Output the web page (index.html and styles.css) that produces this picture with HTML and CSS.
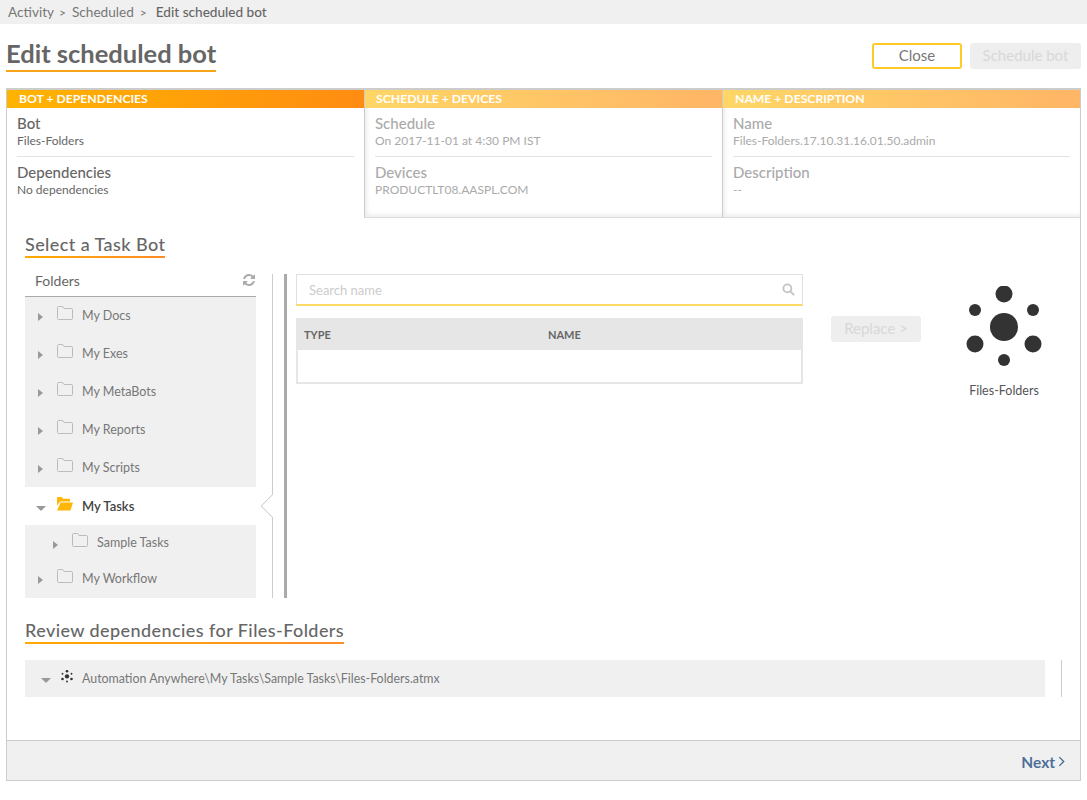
FILE: index.html
```html
<!DOCTYPE html>
<html lang="en">
    <head>
        <meta charset="UTF-8" />
        <title>Edit scheduled bot</title>
        <link rel="stylesheet" href="styles.css">
    </head>
    <body>
        <svg class="defs" width="0" height="0">
            <symbol id="folder" viewBox="0 0 16 14">
                <path d="M1.5 13.5h13a1 1 0 0 0 1-1v-9a1 1 0 0 0-1-1H7L5.7.5H1.5a1 1 0 0 0-1 1v11a1 1 0 0 0 1 1z" />
            </symbol>
            <symbol id="bot" viewBox="0 0 76 84">
                <circle cx="38" cy="41" r="14" />
                <circle cx="38" cy="8" r="8.5" />
                <circle cx="38" cy="74" r="6" />
                <circle cx="9" cy="24" r="6" />
                <circle cx="67" cy="24" r="6" />
                <circle cx="9" cy="58" r="8.5" />
                <circle cx="67" cy="58" r="8.5" />
            </symbol>
        </svg>

        <nav class="crumbs">
            <span>Activity</span><i>&gt;</i><span>Scheduled</span><i>&gt;</i><b>Edit scheduled bot</b>
        </nav>

        <header class="pageHead">
            <h1>Edit scheduled bot</h1>
            <div class="actions">
                <button class="btnClose">Close</button>
                <button class="btnOff btnSchedule">Schedule bot</button>
            </div>
        </header>

        <main class="panel">
            <div class="tabs">
                <section class="tab active">
                    <h2>BOT + DEPENDENCIES</h2>
                    <div class="field line"><h3>Bot</h3><p>Files-Folders</p></div>
                    <div class="field"><h3>Dependencies</h3><p>No dependencies</p></div>
                </section>
                <section class="tab">
                    <h2>SCHEDULE + DEVICES</h2>
                    <div class="field line"><h3>Schedule</h3><p>On 2017-11-01 at 4:30 PM IST</p></div>
                    <div class="field"><h3>Devices</h3><p>PRODUCTLT08.AASPL.COM</p></div>
                </section>
                <section class="tab">
                    <h2>NAME + DESCRIPTION</h2>
                    <div class="field line"><h3>Name</h3><p>Files-Folders.17.10.31.16.01.50.admin</p></div>
                    <div class="field"><h3>Description</h3><p>--</p></div>
                </section>
            </div>

            <div class="content">
                <h2 class="secTitle">Select a Task Bot</h2>
                <div class="picker">
                    <div class="tree">
                        <div class="treeHead">
                            <span>Folders</span>
                            <svg class="refresh" viewBox="0 0 1792 1792"><path d="M1639 1056q0 5-1 7-64 268-268 434.5t-478 166.5q-146 0-282.5-55t-243.5-157l-129 129q-19 19-45 19t-45-19-19-45v-448q0-26 19-45t45-19h448q26 0 45 19t19 45-19 45l-137 137q71 66 161 102t187 36q134 0 250-65t186-179q11-17 53-117 8-23 30-23h192q13 0 22.5 9.5t9.5 22.5zm25-800v448q0 26-19 45t-45 19h-448q-26 0-45-19t-19-45 19-45l138-138q-148-137-349-137-134 0-250 65t-186 179q-11 17-53 117-8 23-30 23h-199q-13 0-22.5-9.5t-9.5-22.5v-7q65-268 270-434.5t480-166.5q146 0 284 55.5t245 156.5l130-129q19-19 45-19t45 19 19 45z" /></svg>
                        </div>
                        <ul class="treeList">
                            <li><i class="arrow"></i><svg class="folder"><use href="#folder" /></svg>My Docs</li>
                            <li><i class="arrow"></i><svg class="folder"><use href="#folder" /></svg>My Exes</li>
                            <li><i class="arrow"></i><svg class="folder"><use href="#folder" /></svg>My MetaBots</li>
                            <li><i class="arrow"></i><svg class="folder"><use href="#folder" /></svg>My Reports</li>
                            <li><i class="arrow"></i><svg class="folder"><use href="#folder" /></svg>My Scripts</li>
                            <li class="current">
                                <i class="arrow down"></i>
                                <svg class="folderOpen" viewBox="0 0 16 14"><path d="M0 1.2C0 .5.5 0 1.2 0h3.6l1.4 1.8h5.6c.7 0 1.2.5 1.2 1.2v1.4H3.2L0 8.6zM3.6 5.6H16l-2.6 8H0z" /></svg>
                                My Tasks
                            </li>
                            <li class="sub"><i class="arrow"></i><svg class="folder"><use href="#folder" /></svg>Sample Tasks</li>
                            <li class="last"><i class="arrow"></i><svg class="folder"><use href="#folder" /></svg>My Workflow</li>
                        </ul>
                    </div>
                    <div class="rule"><span class="notch"></span></div>
                    <div class="results">
                        <div class="search">
                            <span>Search name</span>
                            <svg class="searchIcon" viewBox="0 0 14 14"><circle cx="5.8" cy="5.8" r="4.3" /><path d="M9 9l4 4" /></svg>
                        </div>
                        <div class="grid">
                            <div class="gridHead"><span class="colType">TYPE</span><span>NAME</span></div>
                            <div class="gridBody"></div>
                        </div>
                    </div>
                    <button class="btnOff btnReplace">Replace &gt;</button>
                    <div class="botCard">
                        <svg class="botIcon"><use href="#bot" /></svg>
                        <span>Files-Folders</span>
                    </div>
                </div>

                <h2 class="secTitle review">Review dependencies for Files-Folders</h2>
                <div class="deps">
                    <div class="depRow">
                        <i class="arrow down"></i>
                        <svg class="depIcon"><use href="#bot" /></svg>
                        Automation Anywhere\My Tasks\Sample Tasks\Files-Folders.atmx
                    </div>
                    <div class="depRule"></div>
                </div>
            </div>

            <footer class="panelFoot">
                <a class="next">Next<svg viewBox="0 0 8 12"><path d="M1.5 1l5 5-5 5" /></svg></a>
            </footer>
        </main>
    </body>
</html>
```

FILE: styles.css
```css
* {
    box-sizing: border-box;
}
body {
    margin: 0;
    height: 800px;
    overflow: hidden;
    background-color: #fff;
    color: #666;
    font-family: 'Lato', 'Open Sans', sans-serif;
    font-size: 12px;
}
h1, h2, h3, p, ul {
    margin: 0;
    padding: 0;
}
.defs {
    position: absolute;
}
.crumbs {
    display: flex;
    align-items: center;
    height: 24px;
    padding-left: 8px;
    background-color: #f0f0f0;
    font-size: 13.6px;
    color: #777;
}
.crumbs i {
    margin: 0 9px 0 6px;
    font-style: normal;
    font-size: 12px;
}
.crumbs i:first-of-type {
    margin: 0 6px 0 5px;
}
.crumbs b {
    font-weight: 500;
    color: #666;
}
.pageHead {
    display: flex;
    justify-content: space-between;
    height: 64px;
    padding: 19px 6px 0;
}
.pageHead h1 {
    height: 29px;
    border-bottom: 2px solid #f9a51a;
    font-size: 25.5px;
    line-height: 20px;
    font-weight: 700;
    color: #666;
}
.actions {
    display: flex;
    gap: 8px;
}
button {
    height: 26px;
    border-radius: 3px;
    font-family: inherit;
    font-size: 15px;
    padding: 0 0 2px;
}
.btnClose {
    width: 90px;
    border: 2px solid #ffc926;
    background-color: #fff;
    color: #777;
}
.btnOff {
    border: none;
    background-color: #eee;
    color: #d8d8d8;
}
.btnSchedule {
    width: 111px;
}
.panel {
    display: flex;
    flex-direction: column;
    height: 693px;
    margin: 0 6px;
    border: 1px solid #ccc;
    border-top-width: 2px;
}
.tabs {
    display: flex;
    height: 128px;
}
.tab {
    flex: 0 0 358px;
    padding: 0 10px;
    border-left: 1px solid #ccc;
    border-bottom: 1px solid #ddd;
    box-shadow: inset 2px -2px 4px rgba(0, 0, 0, 0.08);
    color: #aaa;
}
.tab h2 {
    height: 18px;
    margin: 0 -10px 6px;
    padding-left: 11px;
    background: linear-gradient(to right, #ffd666, #ffb566);
    font-size: 12.2px;
    line-height: 18px;
    font-weight: 700;
    color: #fff;
}
.tab:last-child h2 {
    padding-left: 12px;
}
.tab.active {
    flex-basis: 357px;
    border: none;
    box-shadow: none;
    color: #666;
}
.tab.active h2 {
    padding-left: 12px;
    background: linear-gradient(to right, #ffb400, #ff8c12);
}
.field h3 {
    font-size: 15px;
    line-height: 18px;
    font-weight: 500;
}
.field p {
    font-size: 12px;
    line-height: 16px;
    margin-top: 1px;
}
.field.line {
    height: 43px;
    margin-bottom: 6px;
    border-bottom: 1px solid #e3e3e3;
}
.content {
    flex: 1;
    padding: 17px 18px 0;
}
.secTitle {
    width: fit-content;
    height: 23px;
    border-bottom: 2px solid;
    border-image: linear-gradient(to right, #ffaa00, #ff8c2a) 1;
    font-size: 18px;
    line-height: 18px;
    font-weight: 500;
    letter-spacing: 0.42px;
    color: #666;
}
.picker {
    display: flex;
    align-items: flex-start;
    height: 330px;
    margin-top: 10px;
}
.tree {
    width: 231px;
    flex-shrink: 0;
}
.treeHead {
    display: flex;
    justify-content: space-between;
    align-items: center;
    height: 29px;
    padding: 0 0 4px 10px;
    border-bottom: 1px solid #aaa;
    font-size: 14px;
}
.refresh {
    width: 14px;
    height: 14px;
    fill: #aaa;
}
.treeList {
    list-style: none;
    background-color: #f0f0f0;
}
.treeList li {
    display: flex;
    align-items: center;
    height: 38px;
    padding: 0 0 2px 13px;
    font-size: 12.5px;
    color: #777;
}
.treeList li.current {
    padding-bottom: 0;
    background-color: #fff;
    font-size: 13px;
    font-weight: 600;
    color: #444;
}
.treeList li.sub {
    height: 35px;
    padding: 0 0 0 28px;
}
.arrow {
    width: 0;
    height: 0;
    margin: 4px 14px 0 0;
    border-style: solid;
    border-width: 4px 0 4px 5px;
    border-color: transparent transparent transparent #999;
}
.arrow.down {
    margin: 4px 11px 0 -2px;
    border-width: 5px 5px 0;
    border-color: #999 transparent transparent;
}
.folder {
    width: 16px;
    height: 14px;
    margin: -5px 9px 0 0;
    fill: none;
    stroke: #bbb;
}
.folderOpen {
    width: 16px;
    height: 14px;
    margin: -5px 9px 0 0;
    fill: #ffb606;
}
.rule {
    position: relative;
    flex-shrink: 0;
    box-sizing: content-box;
    width: 11px;
    height: 324px;
    margin: 6px 9px 0 16px;
    border-left: 1px solid #ccc;
    border-right: 3px solid #aaa;
}
.notch {
    position: absolute;
    top: 223px;
    left: -9px;
    width: 18px;
    height: 18px;
    background-color: #fff;
    border-left: 1px solid #ccc;
    border-bottom: 1px solid #ccc;
    transform: rotate(45deg);
    clip-path: polygon(0 0, 100% 100%, 0 100%);
}
.results {
    width: 507px;
    flex-shrink: 0;
    margin-top: 6px;
}
.search {
    display: flex;
    justify-content: space-between;
    align-items: center;
    height: 32px;
    padding: 0 7px 0 12px;
    border: 1px solid #e0e0e0;
    border-bottom: 2px solid #ffd966;
    font-size: 13px;
    color: #ccc;
}
.searchIcon {
    width: 13px;
    height: 13px;
    fill: none;
    stroke: #c4c4c4;
    stroke-width: 2;
}
.grid {
    margin-top: 12px;
}
.gridHead {
    display: flex;
    align-items: center;
    height: 32px;
    padding-left: 8px;
    background-color: #e6e6e6;
    font-size: 11px;
    font-weight: 700;
    color: #666;
}
.colType {
    width: 244px;
}
.gridBody {
    height: 34px;
    border: 2px solid #e6e6e6;
    border-top: none;
}
.btnReplace {
    width: 90px;
    flex-shrink: 0;
    margin: 48px 0 0 28px;
}
.botCard {
    display: flex;
    flex-direction: column;
    align-items: center;
    width: 110px;
    margin: 18px 0 0 28px;
    font-size: 12.5px;
    color: #555;
}
.botIcon {
    width: 76px;
    height: 84px;
    fill: #333;
    margin-bottom: 13px;
}
.review {
    margin-top: 23px;
}
.deps {
    display: flex;
    align-items: stretch;
    gap: 16px;
    margin-top: 16px;
}
.depRow {
    display: flex;
    align-items: center;
    width: 1020px;
    height: 37px;
    padding-left: 16px;
    background-color: #f0f0f0;
    font-size: 12.4px;
    color: #777;
}
.depRow .arrow.down {
    margin: 4px 10px 0 0;
}
.depIcon {
    width: 12px;
    height: 13px;
    margin: -4px 9px 0 0;
    fill: #333;
}
.depRule {
    width: 1px;
    background-color: #ccc;
}
.panelFoot {
    display: flex;
    justify-content: flex-end;
    align-items: center;
    height: 40px;
    padding: 2px 15px 0 0;
    border-top: 1px solid #ccc;
    background-color: #f0f0f0;
}
.next {
    display: flex;
    align-items: center;
    gap: 3px;
    font-size: 15.5px;
    font-weight: 700;
    color: #4d6f99;
}
.next svg {
    width: 7px;
    height: 11px;
    fill: none;
    stroke: #4d6f99;
    stroke-width: 1.6;
}
```
